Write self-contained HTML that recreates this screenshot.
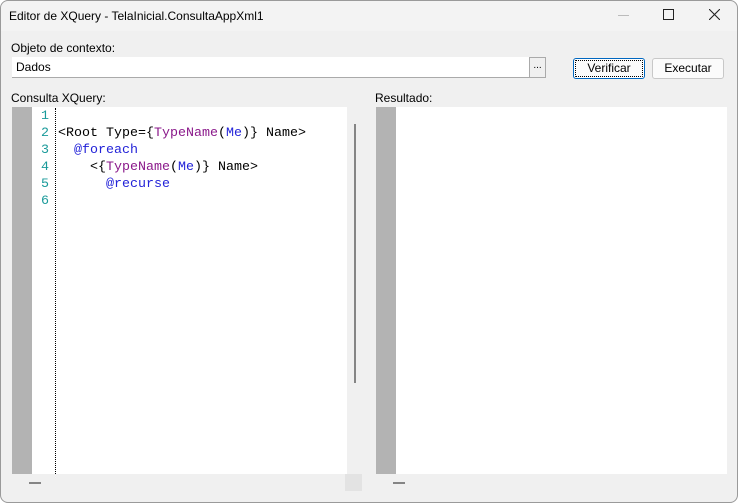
<!DOCTYPE html>
<html><head><style>
body{margin:0;width:738px;height:503px;overflow:hidden;background:#fff;font-family:"Liberation Sans",sans-serif;font-size:12px;color:#000}
.win{position:absolute;left:0;top:0;width:738px;height:503px;box-shadow:inset 0 0 0 1px #9a9a9a;border-radius:8px;background:#f0f0f0;overflow:hidden}
.title{position:absolute;left:1px;top:1px;width:736px;height:30px;background:#f3f3f3;border-radius:8px 8px 0 0}
.abs{position:absolute}
.code{font-family:"Liberation Mono",monospace;font-size:13.33px;line-height:17px;white-space:pre}
.p{color:#8b1a8b}.b{color:#2323d8}.n{color:#1a9a9a}
.btn{position:absolute;height:19px;border:1px solid #c8c8c8;border-radius:3px;background:#fbfbfb;text-align:center;line-height:19px}
</style></head><body>
<div class="win">
<div class="title"></div>
<div class="abs" style="left:9px;top:9px">Editor de XQuery - TelaInicial.ConsultaAppXml1</div>
<div class="abs" style="left:618px;top:15px;width:11px;height:1px;background:#bbb"></div>
<div class="abs" style="left:663px;top:9px;width:9px;height:9px;border:1px solid #222"></div>
<svg class="abs" style="left:709px;top:9px" width="11" height="11"><path d="M0 0L11 11M11 0L0 11" stroke="#222" stroke-width="1.1"/></svg>
<div class="abs" style="left:11px;top:41px">Objeto de contexto:</div>
<div class="abs" style="left:12px;top:57px;width:517px;height:20px;background:#fff;border-bottom:1px solid #aaa"></div>
<div class="abs" style="left:16px;top:60px">Dados</div>
<div class="abs" style="left:529px;top:57px;width:15px;height:19px;background:#f0f0f0;border:1px solid #aaa;text-align:center;font-size:10px;line-height:16px">...</div>
<div class="btn" style="left:573px;top:58px;width:70px;border:1px solid #0067c0;box-shadow:inset 0 0 0 1px #fff;outline:1px dotted #000;outline-offset:-3px">Verificar</div>
<div class="btn" style="left:652px;top:58px;width:70px">Executar</div>
<div class="abs" style="left:11px;top:91px">Consulta XQuery:</div>
<div class="abs" style="left:375px;top:91px">Resultado:</div>
<div class="abs" style="left:12px;top:107px;width:335px;height:367px;background:#fff"></div>
<div class="abs" style="left:12px;top:107px;width:20px;height:367px;background:#b3b3b3"></div>
<div class="abs" style="left:55px;top:108px;height:366px;border-left:1px dotted #000"></div>
<div class="abs code n" style="left:41px;top:108px">1
2
3
4
5
6</div>
<div class="abs code" style="left:58px;top:125px">&lt;Root Type={<span class="p">TypeName</span>(<span class="b">Me</span>)} Name&gt;
  <span class="b">@foreach</span>
    &lt;{<span class="p">TypeName</span>(<span class="b">Me</span>)} Name&gt;
      <span class="b">@recurse</span></div>
<div class="abs" style="left:354px;top:124px;width:2px;height:259px;background:#858585"></div>
<div class="abs" style="left:29px;top:482px;width:12px;height:2px;background:#858585"></div>
<div class="abs" style="left:345px;top:474px;width:17px;height:17px;background:#e3e3e3"></div>
<div class="abs" style="left:376px;top:107px;width:351px;height:367px;background:#fff"></div>
<div class="abs" style="left:376px;top:107px;width:20px;height:367px;background:#b3b3b3"></div>
<div class="abs" style="left:393px;top:482px;width:12px;height:2px;background:#858585"></div>
</div>
</body></html>
